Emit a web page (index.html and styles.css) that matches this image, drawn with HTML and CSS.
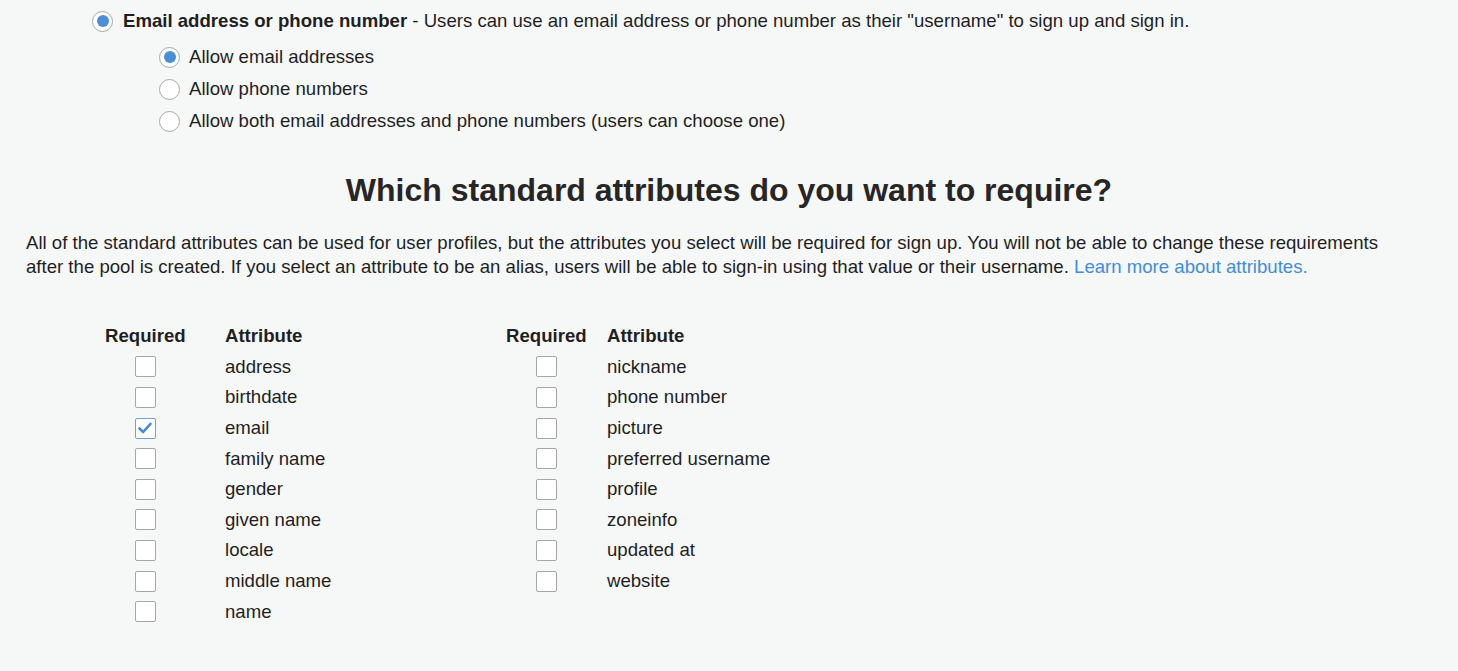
FILE: index.html
```html
<!DOCTYPE html>
<html>
<head>
<meta charset="utf-8">
<link rel="stylesheet" href="styles.css">
</head>
<body>
<div class="page">
  <label class="opt main-opt">
    <span class="radio on"></span>
    <span><b>Email address or phone number</b> - Users can use an email address or phone number as their "username" to sign up and sign in.</span>
  </label>
  <div class="sub-opts">
    <label class="opt"><span class="radio on"></span><span>Allow email addresses</span></label>
    <label class="opt"><span class="radio"></span><span>Allow phone numbers</span></label>
    <label class="opt"><span class="radio"></span><span>Allow both email addresses and phone numbers (users can choose one)</span></label>
  </div>

  <h2 class="title">Which standard attributes do you want to require?</h2>
  <p class="desc">All of the standard attributes can be used for user profiles, but the attributes you select will be required for sign up. You will not be able to change these requirements after the pool is created. If you select an attribute to be an alias, users will be able to sign-in using that value or their username. <a class="link" href="#">Learn more about attributes.</a></p>

  <div class="tables">
    <div class="attr-table left">
      <div class="th">Required</div><div class="th">Attribute</div>
      <div class="cb-cell"><span class="cb"></span></div><div>address</div>
      <div class="cb-cell"><span class="cb"></span></div><div>birthdate</div>
      <div class="cb-cell"><span class="cb checked"><svg viewBox="0 0 20 20" width="20" height="20"><path d="M4.5 10.5 L8.2 14 L15.5 5.8" fill="none" stroke="#4a8ad4" stroke-width="2.6" stroke-linecap="round" stroke-linejoin="round"/></svg></span></div><div>email</div>
      <div class="cb-cell"><span class="cb"></span></div><div>family name</div>
      <div class="cb-cell"><span class="cb"></span></div><div>gender</div>
      <div class="cb-cell"><span class="cb"></span></div><div>given name</div>
      <div class="cb-cell"><span class="cb"></span></div><div>locale</div>
      <div class="cb-cell"><span class="cb"></span></div><div>middle name</div>
      <div class="cb-cell"><span class="cb"></span></div><div>name</div>
    </div>
    <div class="attr-table right">
      <div class="th">Required</div><div class="th">Attribute</div>
      <div class="cb-cell"><span class="cb"></span></div><div>nickname</div>
      <div class="cb-cell"><span class="cb"></span></div><div>phone number</div>
      <div class="cb-cell"><span class="cb"></span></div><div>picture</div>
      <div class="cb-cell"><span class="cb"></span></div><div>preferred username</div>
      <div class="cb-cell"><span class="cb"></span></div><div>profile</div>
      <div class="cb-cell"><span class="cb"></span></div><div>zoneinfo</div>
      <div class="cb-cell"><span class="cb"></span></div><div>updated at</div>
      <div class="cb-cell"><span class="cb"></span></div><div>website</div>
    </div>
  </div>
</div>
</body>
</html>
```

FILE: styles.css
```css
html, body {
  margin: 0;
  padding: 0;
  background: #f6f7f7;
}
body {
  font-family: "Liberation Sans", Arial, Helvetica, sans-serif;
  font-size: 18.6px;
  color: #1f1f1f;
}
.page {
  padding: 9px 26px 40px 26px;
}
.opt {
  display: flex;
  align-items: center;
  gap: 9px;
  height: 32px;
}
.main-opt {
  height: 24px;
  margin-left: 66px;
  gap: 10px;
}
.main-opt b {
  font-weight: bold;
}
.sub-opts {
  margin-top: 8px;
  margin-left: 133px;
  display: flex;
  flex-direction: column;
}
.radio {
  flex: none;
  width: 19px;
  height: 19px;
  border-radius: 50%;
  border: 1px solid #a8a8a8;
  background: #fff;
  box-sizing: content-box;
  position: relative;
}
.radio.on::after {
  content: "";
  position: absolute;
  left: 3.5px;
  top: 3.5px;
  width: 12px;
  height: 12px;
  border-radius: 50%;
  background: #4a8ed8;
}
.title {
  margin: 35px 0 0 0;
  text-align: center;
  font-size: 32px;
  line-height: 36px;
  font-weight: bold;
  color: #262626;
}
.desc {
  margin: 23px 0 0 0;
  max-width: 1385px;
  line-height: 24px;
}
.link {
  color: #3f8ed9;
  text-decoration: none;
}
.tables {
  display: flex;
  margin-top: 42px;
  margin-left: 79px;
}
.attr-table {
  display: grid;
  grid-auto-rows: 30.6px;
  align-items: center;
}
.attr-table.left {
  width: 401px;
  grid-template-columns: 120px auto;
}
.attr-table.right {
  grid-template-columns: 101px auto;
}
.th {
  font-weight: bold;
}
.cb-cell {
  display: flex;
  justify-content: center;
  width: 80px;
}
.cb {
  display: block;
  width: 19px;
  height: 19px;
  border: 1px solid #a6a6a6;
  border-radius: 2px;
  background: #fff;
}
.cb.checked {
  border-color: #6aa2dd;
}
.cb svg {
  display: block;
  margin: -1px 0 0 -1px;
}
```
